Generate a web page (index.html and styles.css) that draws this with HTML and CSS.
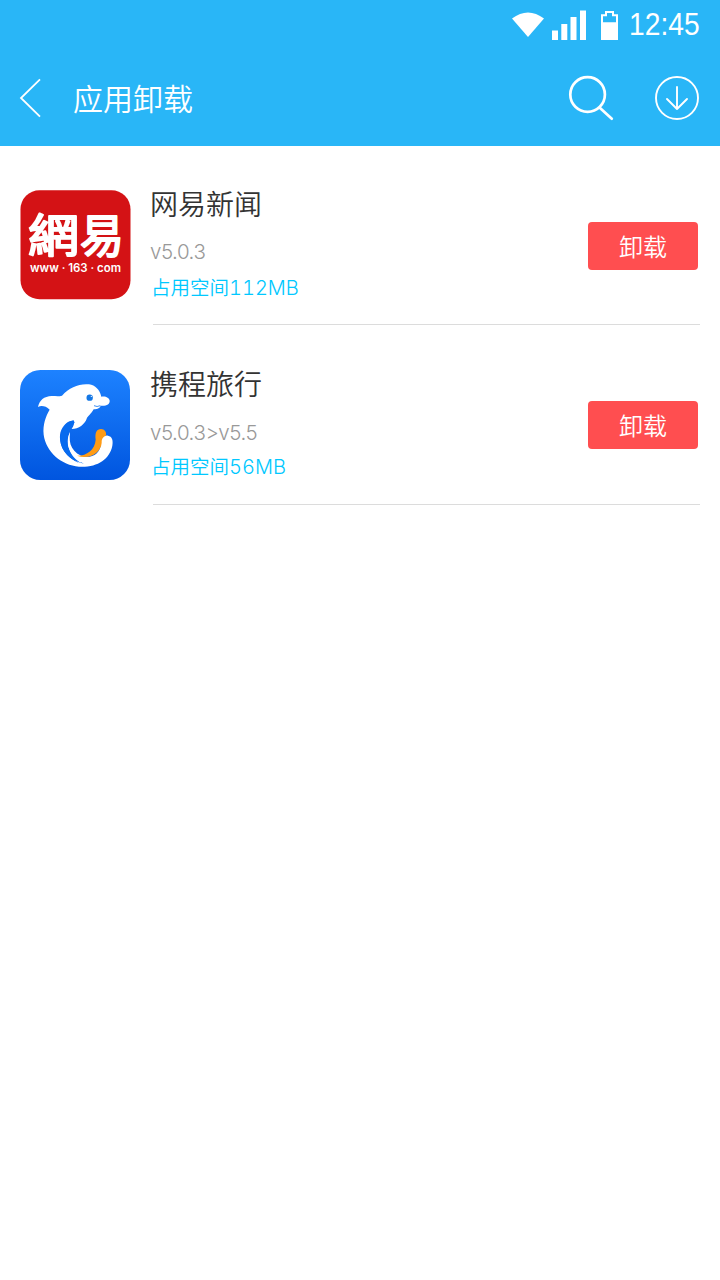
FILE: index.html
```html
<!DOCTYPE html>
<html lang="zh-CN">
<head>
<meta charset="utf-8">
<title>应用卸载</title>
<link rel="stylesheet" href="styles.css">
</head>
<body>
<header class="header">
  <div class="status">
    <svg class="status-icons" width="108" height="34" viewBox="0 0 108 34" fill="#fff">
      <path d="M0 10.500Q16 -1.500 32 10.500L16 29Z"/>
      <path d="M40 22.500h6v9.500h-6zM49.300 16h6v16h-6zM58.500 9h6v23h-6zM68 2.500h6V32h-6z"/>
      <path fill-rule="evenodd" d="M93 3h9v3.200h4V32H89V6.200h4zM95 5v3.200h-4v6h13v-6h-4V5z"/>
    </svg>
    <span class="clock">12:45</span>
  </div>
  <nav class="bar">
    <svg class="back" width="22" height="40" viewBox="0 0 22 40" fill="none" stroke="#fff" stroke-width="1.800"><path d="M21 1.300L2 20L21 38.700"/></svg>
    <h1 class="title">应用卸载</h1>
    <svg class="search" width="46" height="46" viewBox="0 0 46 46" fill="none" stroke="#fff" stroke-width="2.700" stroke-linecap="round"><circle cx="19.600" cy="19.500" r="17.300"/><path d="M32 33L43.800 43.700"/></svg>
    <svg class="download" width="44" height="44" viewBox="0 0 44 44" fill="none" stroke="#fff" stroke-width="1.900" stroke-linecap="round" stroke-linejoin="round"><circle cx="22" cy="22" r="21"/><path d="M22 11V33M12 23L22 33L32 23"/></svg>
  </nav>
</header>
<main class="list">
  <article class="app">
    <svg class="app-icon" viewBox="0 0 111 110">
      <rect x=".5" y=".3" width="110" height="109" rx="19" fill="#d41215"/>
      <g fill="#fff" stroke="#fff" stroke-linejoin="round">
        <text class="logo-char" x="8" y="62" textLength="51" lengthAdjust="spacingAndGlyphs">網</text>
        <text class="logo-char" x="60" y="62" textLength="44" lengthAdjust="spacingAndGlyphs">易</text>
      </g>
      <text class="logo-url" x="10" y="82" textLength="91" lengthAdjust="spacingAndGlyphs" xml:space="preserve">www · 163 · com</text>
    </svg>
    <div class="details">
      <div class="info">
        <h2 class="name">网易新闻</h2>
        <p class="version">v5.0.3</p>
        <p class="size"><span class="size-label">占用空间</span>112MB</p>
      </div>
      <button class="remove">卸载</button>
    </div>
  </article>
  <article class="app app-second">
    <svg class="app-icon" viewBox="30 30 330 330">
      <defs><linearGradient id="blue" x2="0" y2="1"><stop stop-color="#1d82ff"/><stop offset="1" stop-color="#0055df"/></linearGradient></defs>
      <rect x="30" y="30" width="330" height="330" rx="61" fill="url(#blue)"/>
      <path fill="#fff" d="M84 141C88 121 102 109 125 108C137 108 146 110 156 107C178 82 208 70 237 73C256 76 269 89 274 110C285 107 298 112 299 122C300 132 289 139 272 137C270 144 264 147 251 148C243 162 232 170 230 176C225 192 206 207 185 207C191 197 195 188 190 182C174 181 158 195 151 218C145 251 162 291 211 310C178 297 163 250 180 216C173 252 184 280 211 288C246 297 270 282 273 251C271 236 281 225 294 227C306 229 310 240 307 257C299 299 260 323 207 320C154 315 108 276 101 224C98 194 107 169 119 149C107 137 93 136 84 141Z"/>
      <path fill="#086bef" d="M191 181C168 184 151 208 151 240C153 273 179 302 222 311C184 295 169 258 172 230C175 208 184 194 194 188Z"/>
      <path fill="#fff" d="M180 217C167 245 174 285 211 308L225 291C188 282 174 252 180 217Z"/>
      <path fill="#ff9b14" d="M201 287C229 288 255 270 257 239C254 219 260 207 273 207C284 207 290 216 288 227C278 230 274 238 275 249C272 280 237 300 201 287Z"/>
      <circle cx="239" cy="113" r="9.500" fill="#1477e5"/>
      <circle cx="244" cy="109" r="2" fill="#fff"/>
      <path d="M252 137Q261 142 271 137" fill="none" stroke="#1677ef" stroke-width="2.500"/>
    </svg>
    <div class="details">
      <div class="info">
        <h2 class="name">携程旅行</h2>
        <p class="version">v5.0.3&gt;v5.5</p>
        <p class="size"><span class="size-label">占用空间</span>56MB</p>
      </div>
      <button class="remove">卸载</button>
    </div>
  </article>
</main>
</body>
</html>
```
FILE: styles.css
```css
* { box-sizing: border-box; }
body, h1, h2, p { margin: 0; font-weight: 300; }
body {
  min-height: 1280px;
  background: #fff;
  font-family: "Liberation Sans", "Noto Sans CJK SC", sans-serif;
}
svg { display: block; flex: none; }
.header { height: 146px; background: #29b6f7; color: #fff; }
.status { height: 50px; display: flex; justify-content: flex-end; padding: 8px 20px 0 0; }
.clock { width: 71px; margin-left: 9px; font-size: 31px; line-height: 33px; white-space: nowrap; transform: scaleX(.91); transform-origin: left; }
.bar { height: 96px; display: flex; align-items: center; padding: 0 21px 0 19px; }
.title { margin: -3px 0 0 32px; font: 350 30px/44px "Noto Sans CJK SC", sans-serif; }
.search { margin-left: auto; }
.download { margin-left: 41px; }
.list { padding: 0 20px; }
.app { height: 179px; display: flex; padding-top: 44px; }
.app-second { height: 180px; padding-top: 45px; }
.app-icon { width: 111px; height: 110px; margin-right: 22px; }
.app-second .app-icon { width: 110px; margin-right: 23px; }
.logo-char { font: 400 46px "Noto Sans CJK TC", sans-serif; stroke-width: 2px; }
.logo-url { fill: #fff; font: 600 11.500px Inter, sans-serif; }
.details { flex: 1; display: flex; justify-content: space-between; border-bottom: 1px solid #dcdcdc; }
.info { margin-left: -3px; }
.name { height: 47px; font: 350 28px/26px "Noto Sans CJK SC", sans-serif; color: #333; }
.version { height: 35px; font: 300 20.500px/30px Inter, sans-serif; letter-spacing: -.45px; color: #999; }
.size { font: 300 20px/30px Inter, sans-serif; font-variant-numeric: tabular-nums; color: #00c8ff; padding-left: 1px; }
.size-label { font: 350 19.500px/30px "Noto Sans CJK SC", sans-serif; }
.app-second .version { height: 34px; line-height: 31px; }
.remove {
  width: 110px; height: 48px; margin: 32px 2px 0 0; padding: 0;
  border: 0; border-radius: 4px; background: #ff4e50; color: #fff;
  font: 350 24px/48px "Noto Sans CJK SC", sans-serif;
}
.app-second .remove { margin-top: 31px; }
```
